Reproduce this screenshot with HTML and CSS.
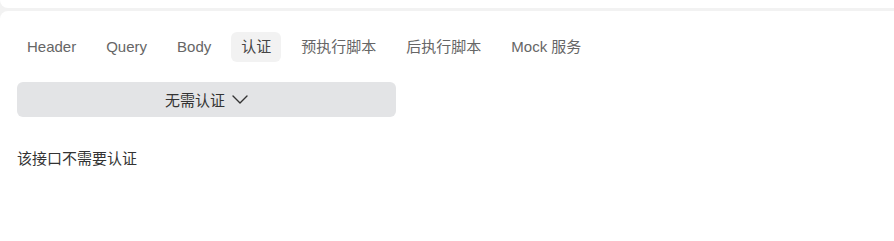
FILE: index.html
```html
<!DOCTYPE html>
<html lang="zh">
<head>
<meta charset="utf-8">
<link rel="stylesheet" href="styles.css">
</head>
<body>
<div class="page">
  <div class="card-top"></div>
  <div class="card">
    <nav class="tabs">
      <span class="tab">Header</span>
      <span class="tab">Query</span>
      <span class="tab">Body</span>
      <span class="tab active">认证</span>
      <span class="tab">预执行脚本</span>
      <span class="tab">后执行脚本</span>
      <span class="tab">Mock 服务</span>
    </nav>
    <div class="select">
      <span class="select-label">无需认证</span>
      <svg class="chevron" width="16" height="9" viewBox="0 0 16 9" aria-hidden="true">
        <path d="M1 1 L8 8 L15 1" fill="none" stroke="#333" stroke-width="1.4" stroke-linecap="round" stroke-linejoin="round"/>
      </svg>
    </div>
    <p class="note">该接口不需要认证</p>
  </div>
</div>
</body>
</html>
```
FILE: styles.css
```css
html, body {
  margin: 0;
  padding: 0;
  background: #f2f2f2;
}
body {
  font-family: "Liberation Sans", "Noto Sans CJK SC", sans-serif;
  font-size: 15px;
  width: 894px;
  height: 241px;
  overflow: hidden;
}
.page {
  display: flex;
  flex-direction: column;
  gap: 3px;
  height: 241px;
}
.card-top {
  height: 8px;
  background: #fff;
  border-bottom-left-radius: 8px;
}
.card {
  flex: 1;
  background: #fff;
  border-top-left-radius: 8px;
  padding: 21px 17px 0 17px;
}
.tabs {
  display: flex;
  gap: 10px;
}
.tab {
  height: 30px;
  line-height: 30px;
  padding: 0 10px;
  border-radius: 6px;
  color: #666;
  white-space: nowrap;
}
.tab.active {
  background: #f2f2f2;
  color: #444;
}
.select {
  margin-top: 20px;
  width: 379px;
  height: 35px;
  border-radius: 6px;
  background: #e3e4e6;
  display: flex;
  align-items: center;
  justify-content: center;
  gap: 7px;
  color: #333;
}
.chevron {
  display: block;
}
.note {
  margin: 32px 0 0 0;
  color: #333;
  line-height: 20px;
}
```
